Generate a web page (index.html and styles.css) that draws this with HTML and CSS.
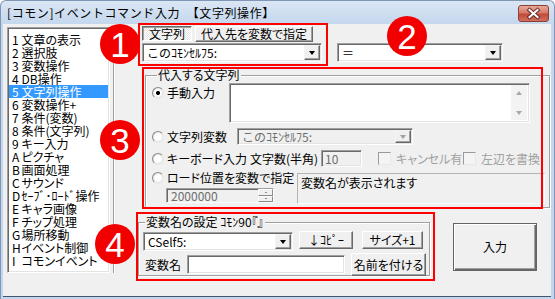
FILE: index.html
```html
<!DOCTYPE html>
<html lang="ja">
<head>
    <meta charset="UTF-8">
    <title>[コモン]イベントコマンド入力</title>
    <link rel="stylesheet" href="styles.css">
</head>
<body>
<div class="screen">
    <div class="window">
        <div class="titlebar">
            <span class="title">[コモン]イベントコマンド入力　【文字列操作】</span>
            <div class="close-btn">
                <svg width="31" height="17" viewBox="0 0 31 17">
                    <path d="M11.5 5 L19.5 12 M19.5 5 L11.5 12" stroke="#6b2b24" stroke-width="4" stroke-linecap="square" fill="none"/>
                    <path d="M11.5 5 L19.5 12 M19.5 5 L11.5 12" stroke="#fff" stroke-width="2" stroke-linecap="square" fill="none"/>
                </svg>
            </div>
        </div>

        <div class="client">
            <ul class="cmdlist">
                <li><span class="num">1</span>文章の表示</li>
                <li><span class="num">2</span>選択肢</li>
                <li><span class="num">3</span>変数操作</li>
                <li><span class="num">4</span>DB操作</li>
                <li class="selected"><span class="num">5</span>文字列操作</li>
                <li><span class="num">6</span>変数操作+</li>
                <li><span class="num">7</span>条件(変数)</li>
                <li><span class="num">8</span>条件(文字列)</li>
                <li><span class="num">9</span>キー入力</li>
                <li><span class="num">A</span>ピクチャ</li>
                <li><span class="num">B</span>画面処理</li>
                <li><span class="num">C</span>サウンド</li>
                <li><span class="num">D</span><span class="hw">ｾｰﾌﾞ･ﾛｰﾄﾞ</span>操作</li>
                <li><span class="num">E</span>キャラ画像</li>
                <li><span class="num">F</span>チップ処理</li>
                <li><span class="num">G</span>場所移動</li>
                <li><span class="num">H</span>イベント制御</li>
                <li><span class="num">I</span>コモンイベント</li>
            </ul>
            <div class="divider"></div>

            <div class="main">
                <div class="tabs">
                    <div class="btn tab-on">文字列</div>
                    <div class="btn tab-var">代入先を変数で指定</div>
                </div>
                <div class="selectors">
                    <div class="combo combo-target"><span class="combo-text hw">このｺﾓﾝｾﾙﾌ5:</span><span class="combo-arrow"></span></div>
                    <div class="combo combo-op"><span class="combo-text">＝</span><span class="combo-arrow"></span></div>
                </div>

                <div class="group group-source">
                    <div class="group-title">代入する文字列</div>
                    <div class="row row-manual">
                        <div class="opt opt-manual"><span class="radio checked"></span>手動入力</div>
                        <div class="memo">
                            <div class="memo-text"></div>
                            <div class="vscroll"><span class="arr-up"></span><span class="arr-down"></span></div>
                        </div>
                    </div>
                    <div class="row row-var">
                        <div class="opt opt-var"><span class="radio"></span>文字列変数</div>
                        <div class="combo combo-off"><span class="combo-text hw">このｺﾓﾝｾﾙﾌ5:</span><span class="combo-arrow"></span></div>
                    </div>
                    <div class="row row-key">
                        <div class="opt opt-key"><span class="radio"></span>キーボード入力</div>
                        <span class="len-label">文字数(半角)</span>
                        <div class="field field-off len-input">10</div>
                        <div class="check-item"><span class="checkbox"></span>キャンセル有</div>
                        <div class="check-item"><span class="checkbox"></span>左辺を書換</div>
                    </div>
                    <div class="row row-load">
                        <div class="load-col">
                            <div class="opt opt-load"><span class="radio"></span>ロード位置を変数で指定</div>
                            <div class="spin">
                                <span class="spin-text">2000000</span>
                                <span class="spin-btns"><span class="spin-b"></span><span class="spin-b"></span></span>
                            </div>
                        </div>
                        <div class="varname">変数名が表示されます</div>
                    </div>
                </div>

                <div class="bottom">
                    <div class="group group-name">
                        <div class="group-title">変数名の設定 <span class="hw">ｺﾓﾝ90</span>『』</div>
                        <div class="row row-cself">
                            <div class="combo combo-cself"><span class="combo-text">CSelf5:</span><span class="combo-arrow"></span></div>
                            <div class="btn btn-copy"><span class="hw">↓ｺﾋﾟｰ</span></div>
                            <div class="btn btn-size">サイズ+1</div>
                        </div>
                        <div class="row row-vname">
                            <span class="vname-label">変数名</span>
                            <div class="field vname-input"></div>
                            <div class="btn btn-name">名前を付ける</div>
                        </div>
                    </div>
                    <div class="btn btn-enter">入力</div>
                </div>
            </div>
        </div>
    </div>

    <!-- annotation marks drawn over the dialog -->
    <div class="mark box1"></div>
    <div class="mark box3"></div>
    <div class="mark box4"></div>
    <div class="badge b1">1</div>
    <div class="badge b2">2</div>
    <div class="badge b3">3</div>
    <div class="badge b4">4</div>
</div>
</body>
</html>
```

FILE: styles.css
```css
* {
    box-sizing: border-box;
}
body {
    margin: 0;
    font-family: "Noto Sans CJK JP", sans-serif;
    font-size: 12px;
    line-height: 12px;
    font-feature-settings: "palt";
    color: #000;
}
.hw {
    font-feature-settings: normal;
}
.screen {
    position: relative;
    width: 555px;
    height: 299px;
    overflow: hidden;
}
.window {
    width: 555px;
    height: 299px;
    display: flex;
    flex-direction: column;
    background: linear-gradient(#dae6f4, #c4d7ed 23px, #c2d6ee);
    border: 1px solid #7f96b4;
    border-bottom: none;
    border-radius: 6px 6px 0 0;
}

/* title bar */
.titlebar {
    height: 23px;
    display: flex;
    justify-content: space-between;
    align-items: flex-start;
}
.title {
    font-feature-settings: normal;
    letter-spacing: 0.6px;
    padding-left: 6px;
    line-height: 24px;
    white-space: nowrap;
}
.close-btn {
    width: 31px;
    height: 17px;
    margin: 4px 5px 0 0;
    border: 1px solid #8c4034;
    border-radius: 3px;
    background: linear-gradient(#e9a99d, #d77a69 45%, #c24a38 55%, #d0705f);
}
.close-btn svg {
    display: block;
    margin: -1px;
}

/* client area */
.client {
    flex: 1;
    margin: 0 3px 3px 2px;
    background: #f0f0f0;
    display: flex;
    align-items: flex-start;
    box-shadow: 0 1px 0 #44546c;
}
.cmdlist {
    list-style: none;
    margin: 3px 0 0 4px;
    padding: 5px 1px 0 1px;
    width: 103px;
    height: 246px;
    background: #fff;
    border: 1px solid;
    border-color: #a0a0a0 #fff #fff #a0a0a0;
    box-shadow: inset 1px 1px 0 #696969, inset -1px -1px 0 #e3e3e3;
}
.cmdlist li {
    height: 13px;
    line-height: 13px;
    padding-left: 3px;
    white-space: nowrap;
}
.cmdlist li.selected {
    background: #3399ff;
    color: #fff;
}
.num {
    display: inline-block;
    width: 9.5px;
}
.divider {
    margin: 3px 0 0 3px;
    width: 2px;
    height: 246px;
    border-left: 1px solid #a0a0a0;
    border-right: 1px solid #fff;
}
.main {
    margin-left: 23px;
    width: 413px;
}

/* buttons */
.btn {
    display: flex;
    align-items: center;
    justify-content: center;
    background: #f0f0f0;
    border: 1px solid;
    border-color: #fff #696969 #696969 #fff;
    box-shadow: inset -1px -1px 0 #a0a0a0;
    white-space: nowrap;
}
.tabs {
    display: flex;
    gap: 3px;
    margin: 2px 0 0 4px;
}
.tab-on {
    width: 50px;
    height: 15px;
    border-color: #696969 #fff #fff #696969;
    box-shadow: inset 1px 1px 0 #a0a0a0;
    background: repeating-conic-gradient(#fff 0 25%, #e6e6e6 0 50%) 0 0 / 2px 2px;
}
.tab-var {
    width: 118px;
    height: 16px;
}

/* combo boxes and fields */
.combo {
    display: flex;
    height: 19px;
    padding: 1px 1px 1px 2px;
    background: #fff;
    border: 1px solid;
    border-color: #a0a0a0 #fff #fff #a0a0a0;
    box-shadow: inset 1px 1px 0 #696969, inset -1px -1px 0 #e3e3e3;
}
.combo-text {
    flex: 1;
    padding: 1px 0 0 2px;
    line-height: 14px;
    white-space: nowrap;
}
.combo-arrow {
    width: 16px;
    display: flex;
    align-items: center;
    justify-content: center;
    background: #f0f0f0;
    border: 1px solid;
    border-color: #f4f4f4 #696969 #696969 #f4f4f4;
    box-shadow: inset -1px -1px 0 #a0a0a0;
}
.combo-arrow::before {
    content: "";
    border-top: 4px solid #000;
    border-left: 3.5px solid transparent;
    border-right: 3.5px solid transparent;
}
.selectors {
    display: flex;
    gap: 15px;
    margin: 1px 0 0 4px;
}
.combo-target {
    width: 180px;
}
.combo-op {
    width: 166px;
}
.combo-off {
    width: 176px;
    height: 17px;
    background: #f0f0f0;
    color: #6d6d6d;
}
.combo-off .combo-text {
    padding-top: 0;
}
.combo-off .combo-arrow::before {
    border-top-color: #a0a0a0;
}
.field {
    background: #fff;
    border: 1px solid;
    border-color: #a0a0a0 #fff #fff #a0a0a0;
    box-shadow: inset 1px 1px 0 #696969, inset -1px -1px 0 #e3e3e3;
    padding: 2px 3px;
    line-height: 12px;
}
.field-off {
    background: #f0f0f0;
    color: #6d6d6d;
}

/* group boxes */
.group {
    border: 1px solid #a0a0a0;
    box-shadow: inset 1px 1px 0 #fff, 1px 1px 0 #fff;
}
.group-title {
    display: table;
    margin: -7px 0 0 5px;
    padding: 0 1px;
    background: #f0f0f0;
    line-height: 12px;
    white-space: nowrap;
}
.group-source {
    margin: 13px 0 0 7px;
    width: 405px;
    height: 133px;
    padding-left: 6px;
}
.row {
    display: flex;
    align-items: flex-start;
}
.opt {
    display: flex;
    align-items: center;
    gap: 3px;
    white-space: nowrap;
}
.radio {
    width: 12px;
    height: 12px;
    flex: none;
    border-radius: 50%;
    border: 1px solid;
    border-color: #8a8a8a #e8e8e8 #e8e8e8 #8a8a8a;
    background: radial-gradient(circle, #fff 0 3px, #e4e4e4 5px);
}
.radio.checked {
    background: radial-gradient(circle, #000 0 1.6px, #fff 2.4px 3px, #e4e4e4 5px);
}
.row-manual {
    margin-top: 2px;
}
.opt-manual {
    width: 77px;
    height: 20px;
}
.memo {
    width: 301px;
    height: 40px;
    display: flex;
    padding: 2px;
    background: #fff;
    border: 1px solid;
    border-color: #a0a0a0 #fff #fff #a0a0a0;
    box-shadow: inset 1px 1px 0 #696969, inset -1px -1px 0 #e3e3e3;
}
.memo-text {
    flex: 1;
}
.vscroll {
    width: 16px;
    margin-top: -1px;
    display: flex;
    flex-direction: column;
    justify-content: space-between;
    align-items: center;
    padding: 6px 0 5px;
    background: #f3f3f3;
}
.arr-up {
    border-bottom: 4px solid #a8a8a8;
    border-left: 3.5px solid transparent;
    border-right: 3.5px solid transparent;
}
.arr-down {
    border-top: 4px solid #a8a8a8;
    border-left: 3.5px solid transparent;
    border-right: 3.5px solid transparent;
}
.row-var {
    margin-top: 5px;
}
.opt-var {
    width: 85px;
    height: 17px;
}
.row-key {
    margin-top: 5px;
    height: 17px;
    align-items: center;
}
.opt-key {
    width: 98px;
    height: 17px;
}
.len-label {
    width: 71px;
    white-space: nowrap;
}
.len-input {
    width: 41px;
    height: 17px;
}
.check-item {
    display: flex;
    align-items: center;
    gap: 5px;
    width: 85px;
    margin-left: 16px;
    color: #a0a0a0;
    white-space: nowrap;
}
.check-item + .check-item {
    margin-left: 0;
}
.checkbox {
    width: 13px;
    height: 13px;
    flex: none;
    background: #f4f4f4;
    border: 1px solid;
    border-color: #9a9a9a #e8e8e8 #e8e8e8 #9a9a9a;
}
.row-load {
    margin-top: 4px;
}
.load-col {
    width: 145px;
}
.opt-load {
    height: 14px;
}
.spin {
    display: flex;
    width: 108px;
    height: 15px;
    margin: 3px 0 0 14px;
    background: #f0f0f0;
    border: 1px solid;
    border-color: #a0a0a0 #fff #fff #a0a0a0;
    box-shadow: inset 1px 1px 0 #696969;
}
.spin-text {
    flex: 1;
    padding: 1px 0 0 4px;
    line-height: 12px;
    color: #6d6d6d;
}
.spin-btns {
    width: 15px;
    display: flex;
    flex-direction: column;
}
.spin-b {
    flex: 1;
    display: flex;
    align-items: center;
    justify-content: center;
    border: 1px solid;
    border-color: #fff #8a8a8a #8a8a8a #fff;
}
.spin-b::before {
    content: "";
    width: 2px;
    height: 1px;
    background: #8a8a8a;
}
.varname {
    width: 248px;
    height: 31px;
    margin-top: 2px;
    padding: 3px 0 0 3px;
    border: 1px solid;
    border-color: #b4b4b4 #fff #fff #b4b4b4;
    white-space: nowrap;
}

/* bottom part */
.bottom {
    display: flex;
    align-items: flex-start;
    margin-top: 14px;
}
.group-name {
    width: 292px;
    height: 54px;
}
.group-name .group-title {
    margin-left: 6px;
}
.row-cself {
    margin-top: 3px;
    padding-left: 4px;
}
.combo-cself {
    width: 150px;
    margin-top: 1px;
}
.btn-copy {
    width: 54px;
    height: 18px;
    margin-left: 6px;
}
.btn-size {
    width: 61px;
    height: 18px;
    margin-left: 9px;
}
.row-vname {
    margin-top: 2px;
    padding-left: 6px;
}
.vname-label {
    width: 42px;
    line-height: 23px;
}
.vname-input {
    width: 158px;
    height: 19px;
    margin-top: 2px;
}
.btn-name {
    width: 75px;
    height: 23px;
    margin-left: 6px;
}
.btn-enter {
    width: 84px;
    height: 48px;
    margin: 1px 0 0 23px;
    border: 1px solid #646464;
    box-shadow: inset 1px 1px 0 #fff, inset -1px -1px 0 #696969, inset -2px -2px 0 #a0a0a0;
}

/* red annotation marks */
.mark {
    position: absolute;
    border: 2px solid #ff0000;
}
.box1 {
    left: 138px;
    top: 23px;
    width: 190px;
    height: 43px;
}
.box3 {
    left: 142px;
    top: 67px;
    width: 401px;
    height: 142px;
}
.box4 {
    left: 136px;
    top: 212px;
    width: 299px;
    height: 69px;
}
.badge {
    position: absolute;
    width: 40px;
    height: 40px;
    border-radius: 50%;
    background: #f20000;
    color: #fff;
    font-family: "Liberation Sans", Arial, sans-serif;
    font-size: 35px;
    line-height: 41px;
    text-align: center;
}
.b1 {
    left: 100px;
    top: 24px;
}
.b2 {
    left: 387px;
    top: 16px;
}
.b3 {
    left: 100px;
    top: 120px;
}
.b4 {
    left: 95px;
    top: 224px;
}
```
